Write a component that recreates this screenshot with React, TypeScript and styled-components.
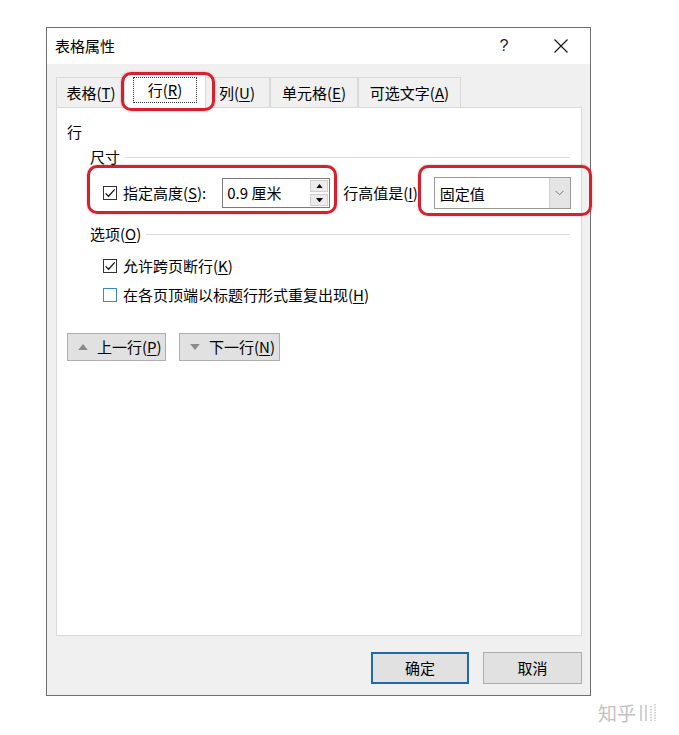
import React from 'react'
import styled, { createGlobalStyle } from 'styled-components'

const GlobalStyle = createGlobalStyle`
  html, body {
    margin: 0;
    padding: 0;
    background: #fff;
  }
  body {
    font-family: "Noto Sans CJK SC", "Microsoft YaHei", sans-serif;
    font-size: 15px;
    color: #000;
    white-space: nowrap;
  }
`

const Page = styled.div`
  width: 679px;
  height: 735px;
  box-sizing: border-box;
  padding: 27px 0 0 46px;
`

const Dialog = styled.div`
  width: 545px;
  height: 669px;
  box-sizing: border-box;
  border: 1px solid #6f6f6f;
  background: #f0f0f0;
  display: flex;
  flex-direction: column;
`

const TitleBar = styled.div`
  height: 36px;
  flex: 0 0 36px;
  background: #fff;
  display: flex;
  align-items: center;
  padding: 0 6px 0 8px;
`

const Title = styled.div`
  flex: 1;
  line-height: 20px;
`

const TitleButtons = styled.div`
  display: flex;
  gap: 11px;
`

const TitleButton = styled.div`
  width: 46px;
  height: 36px;
  display: flex;
  align-items: center;
  justify-content: center;
  font-family: "Liberation Sans", sans-serif;
  font-size: 16px;
  color: #222;
`

const Body = styled.div`
  flex: 1;
  display: flex;
  flex-direction: column;
  padding: 9px 8px 11px 9px;
  min-height: 0;
`

const TabRow = styled.div`
  display: flex;
  align-items: flex-end;
  height: 35px;
  margin-bottom: -1px;
  position: relative;
  z-index: 2;
`

const Tab = styled.div<{ $w: number; $active?: boolean }>`
  position: relative;
  flex: 0 0 auto;
  width: ${p => p.$w}px;
  height: ${p => (p.$active ? 35 : 31)}px;
  margin: 0 ${p => (p.$active ? -2 : 0)}px;
  box-sizing: border-box;
  border: 1px solid #d9d9d9;
  border-bottom: ${p => (p.$active ? 'none' : '1px solid #d9d9d9')};
  background: ${p => (p.$active ? '#fff' : '#f0f0f0')};
  z-index: ${p => (p.$active ? 1 : 0)};
  display: flex;
  align-items: center;
  justify-content: center;
  line-height: 20px;
  padding-bottom: ${p => (p.$active ? 3 : 0)}px;
`

const FocusLabel = styled.span`
  border: 1px dotted #333;
  padding: 2px 14px;
`

const Key = styled.u`
  text-underline-offset: 2px;
`

const Panel = styled.div`
  flex: 1;
  background: #fff;
  border: 1px solid #d9d9d9;
  padding: 14px 10px 0 10px;
  display: flex;
  flex-direction: column;
  position: relative;
  z-index: 1;
`

const Label = styled.div`
  line-height: 20px;
`

const Group = styled.div`
  margin: 0 1px 0 23px;
  display: flex;
  flex-direction: column;
`

const GroupHeader = styled.div<{ $mt: number }>`
  display: flex;
  align-items: center;
  gap: 5px;
  line-height: 20px;
  margin-top: ${p => p.$mt}px;
`

const Rule = styled.div`
  flex: 1;
  height: 1px;
  background: #dcdcdc;
`

const SizeRow = styled.div`
  display: flex;
  align-items: center;
  margin: 10px 0 0 13px;
  height: 32px;
`

const Highlight = styled.div<{ $ml?: number }>`
  position: relative;
  flex: 0 0 auto;
  display: flex;
  align-items: center;
  margin-left: ${p => p.$ml || 0}px;
`

const Annot = styled.span<{ $t: number; $r: number; $b: number; $l: number }>`
  position: absolute;
  top: ${p => p.$t}px;
  right: ${p => p.$r}px;
  bottom: ${p => p.$b}px;
  left: ${p => p.$l}px;
  border: 3px solid #d3222d;
  border-radius: 10px;
  box-shadow: 0 0 2px rgba(190, 20, 30, 0.45);
  pointer-events: none;
  z-index: 5;
`

const CheckLabel = styled.label`
  flex: 0 0 auto;
  display: flex;
  align-items: center;
  gap: 6px;
  line-height: 20px;
`

const Box = styled.span<{ $blue?: boolean }>`
  width: 14px;
  height: 14px;
  box-sizing: border-box;
  border: 1px solid ${p => (p.$blue ? '#3b88c8' : '#333')};
  background: #fff;
  display: flex;
  align-items: center;
  justify-content: center;
`

const NumberInput = styled.div`
  flex: 0 0 auto;
  margin-left: 16px;
  width: 108px;
  height: 30px;
  box-sizing: border-box;
  border: 1px solid #7a7a7a;
  display: flex;
  align-items: center;
`

const InputText = styled.div`
  flex: 1;
  padding-left: 4px;
  line-height: 20px;
`

const Spin = styled.div`
  width: 18px;
  height: 26px;
  margin-right: 1px;
  display: flex;
  flex-direction: column;
  gap: 2px;
`

const SpinButton = styled.div`
  flex: 1;
  background: #ececec;
  border: 1px solid #cfcfcf;
  display: flex;
  align-items: center;
  justify-content: center;
`

const InlineLabel = styled.div<{ $ml: number }>`
  flex: 0 0 auto;
  margin-left: ${p => p.$ml}px;
  line-height: 20px;
`

const Select = styled.div`
  width: 137px;
  height: 32px;
  box-sizing: border-box;
  border: 1px solid #9a9a9a;
  background: #fff;
  display: flex;
  align-items: stretch;
`

const SelectText = styled.div`
  flex: 1;
  padding-left: 5px;
  display: flex;
  align-items: center;
`

const SelectArrow = styled.div`
  width: 20px;
  background: #e5e5e5;
  border-left: 1px solid #d0d0d0;
  display: flex;
  align-items: center;
  justify-content: center;
`

const CheckRow = styled.div<{ $mt: number }>`
  margin: ${p => p.$mt}px 0 0 13px;
  display: flex;
`

const NavRow = styled.div`
  margin-top: 28px;
  display: flex;
  gap: 13px;
`

const NavButton = styled.div<{ $w: number }>`
  width: ${p => p.$w}px;
  height: 28px;
  box-sizing: border-box;
  border: 1px solid #adadad;
  background: #e1e1e1;
  display: flex;
  align-items: center;
  gap: 9px;
  padding-left: 10px;
  line-height: 20px;
`

const Footer = styled.div`
  margin-top: 16px;
  display: flex;
  justify-content: flex-end;
  gap: 14px;
`

const DialogButton = styled.div<{ $primary?: boolean }>`
  width: ${p => (p.$primary ? 98 : 99)}px;
  height: 32px;
  box-sizing: border-box;
  border: ${p => (p.$primary ? '2px solid #1f6aa8' : '1px solid #adadad')};
  background: #e1e1e1;
  display: flex;
  align-items: center;
  justify-content: center;
  line-height: 20px;
`

const Watermark = styled.div`
  margin: 6px 0 0 552px;
  display: flex;
  align-items: center;
  gap: 2px;
  color: #c2c2c2;
  font-size: 19px;
  line-height: 22px;
`

const Check = () => (
  <svg width="12" height="12" viewBox="0 0 11 11">
    <path d="M1.5 5.8 L4.2 8.5 L9.8 2.2" fill="none" stroke="#111" strokeWidth="1.1" />
  </svg>
)

const Tri = ({ up, color, w }: { up: boolean; color: string; w: number }) => (
  <svg width={w} height={w / 2 + 1} viewBox="0 0 8 5">
    <path d={up ? 'M0 5 L4 0 L8 5 Z' : 'M0 0 L8 0 L4 5 Z'} fill={color} />
  </svg>
)

const App = () => (
  <Page>
    <GlobalStyle />
    <Dialog>
      <TitleBar>
        <Title>表格属性</Title>
        <TitleButtons>
          <TitleButton>?</TitleButton>
          <TitleButton>
            <svg width="14" height="14" viewBox="0 0 14 14">
              <path d="M0.5 0.5 L13.5 13.5 M13.5 0.5 L0.5 13.5" stroke="#111" strokeWidth="1.1" />
            </svg>
          </TitleButton>
        </TitleButtons>
      </TitleBar>
      <Body>
        <TabRow>
          <Tab $w={70}>表格(<Key>T</Key>)</Tab>
          <Tab $w={82} $active>
            <FocusLabel>行(<Key>R</Key>)</FocusLabel>
            <Annot $t={-2} $r={-10} $b={-3} $l={-4} />
          </Tab>
          <Tab $w={66}>列(<Key>U</Key>)</Tab>
          <Tab $w={88}>单元格(<Key>E</Key>)</Tab>
          <Tab $w={103}>可选文字(<Key>A</Key>)</Tab>
        </TabRow>
        <Panel>
          <Label>行</Label>
          <Group>
            <GroupHeader $mt={5}>
              <span>尺寸</span>
              <Rule />
            </GroupHeader>
            <SizeRow>
              <Highlight>
                <CheckLabel>
                  <Box><Check /></Box>
                  <span>指定高度(<Key>S</Key>):</span>
                </CheckLabel>
                <NumberInput>
                  <InputText>0.9 厘米</InputText>
                  <Spin>
                    <SpinButton><Tri up color="#111" w={7} /></SpinButton>
                    <SpinButton><Tri up={false} color="#111" w={7} /></SpinButton>
                  </Spin>
                </NumberInput>
                <Annot $t={-13} $r={-7} $b={-6} $l={-16} />
              </Highlight>
              <InlineLabel $ml={13}>行高值是(<Key>I</Key>)</InlineLabel>
              <Highlight $ml={16}>
                <Select>
                  <SelectText>固定值</SelectText>
                  <SelectArrow>
                    <svg width="9" height="6" viewBox="0 0 9 6">
                      <path d="M0.5 0.8 L4.5 4.8 L8.5 0.8" fill="none" stroke="#777" strokeWidth="1" />
                    </svg>
                  </SelectArrow>
                </Select>
                <Annot $t={-12} $r={-21} $b={-7} $l={-16} />
              </Highlight>
            </SizeRow>
            <GroupHeader $mt={15}>
              <span>选项(<Key>O</Key>)</span>
              <Rule />
            </GroupHeader>
            <CheckRow $mt={12}>
              <CheckLabel>
                <Box><Check /></Box>
                <span>允许跨页断行(<Key>K</Key>)</span>
              </CheckLabel>
            </CheckRow>
            <CheckRow $mt={9}>
              <CheckLabel>
                <Box $blue />
                <span>在各页顶端以标题行形式重复出现(<Key>H</Key>)</span>
              </CheckLabel>
            </CheckRow>
          </Group>
          <NavRow>
            <NavButton $w={99}>
              <Tri up color="#8a8a8a" w={10} />
              <span>上一行(<Key>P</Key>)</span>
            </NavButton>
            <NavButton $w={101}>
              <Tri up={false} color="#8a8a8a" w={10} />
              <span>下一行(<Key>N</Key>)</span>
            </NavButton>
          </NavRow>
        </Panel>
        <Footer>
          <DialogButton $primary>确定</DialogButton>
          <DialogButton>取消</DialogButton>
        </Footer>
      </Body>
    </Dialog>
    <Watermark>
      <span>知乎</span>
      <svg width="20" height="20" viewBox="0 0 20 20">
        <path d="M3 2 V18 M8 2 V18" stroke="#c8c8c8" strokeWidth="1.6" />
        <path d="M13 3 V18 M17 1 V18" stroke="#c8c8c8" strokeWidth="1.6" strokeDasharray="1.5 1.2" />
      </svg>
    </Watermark>
  </Page>
)

export default App
